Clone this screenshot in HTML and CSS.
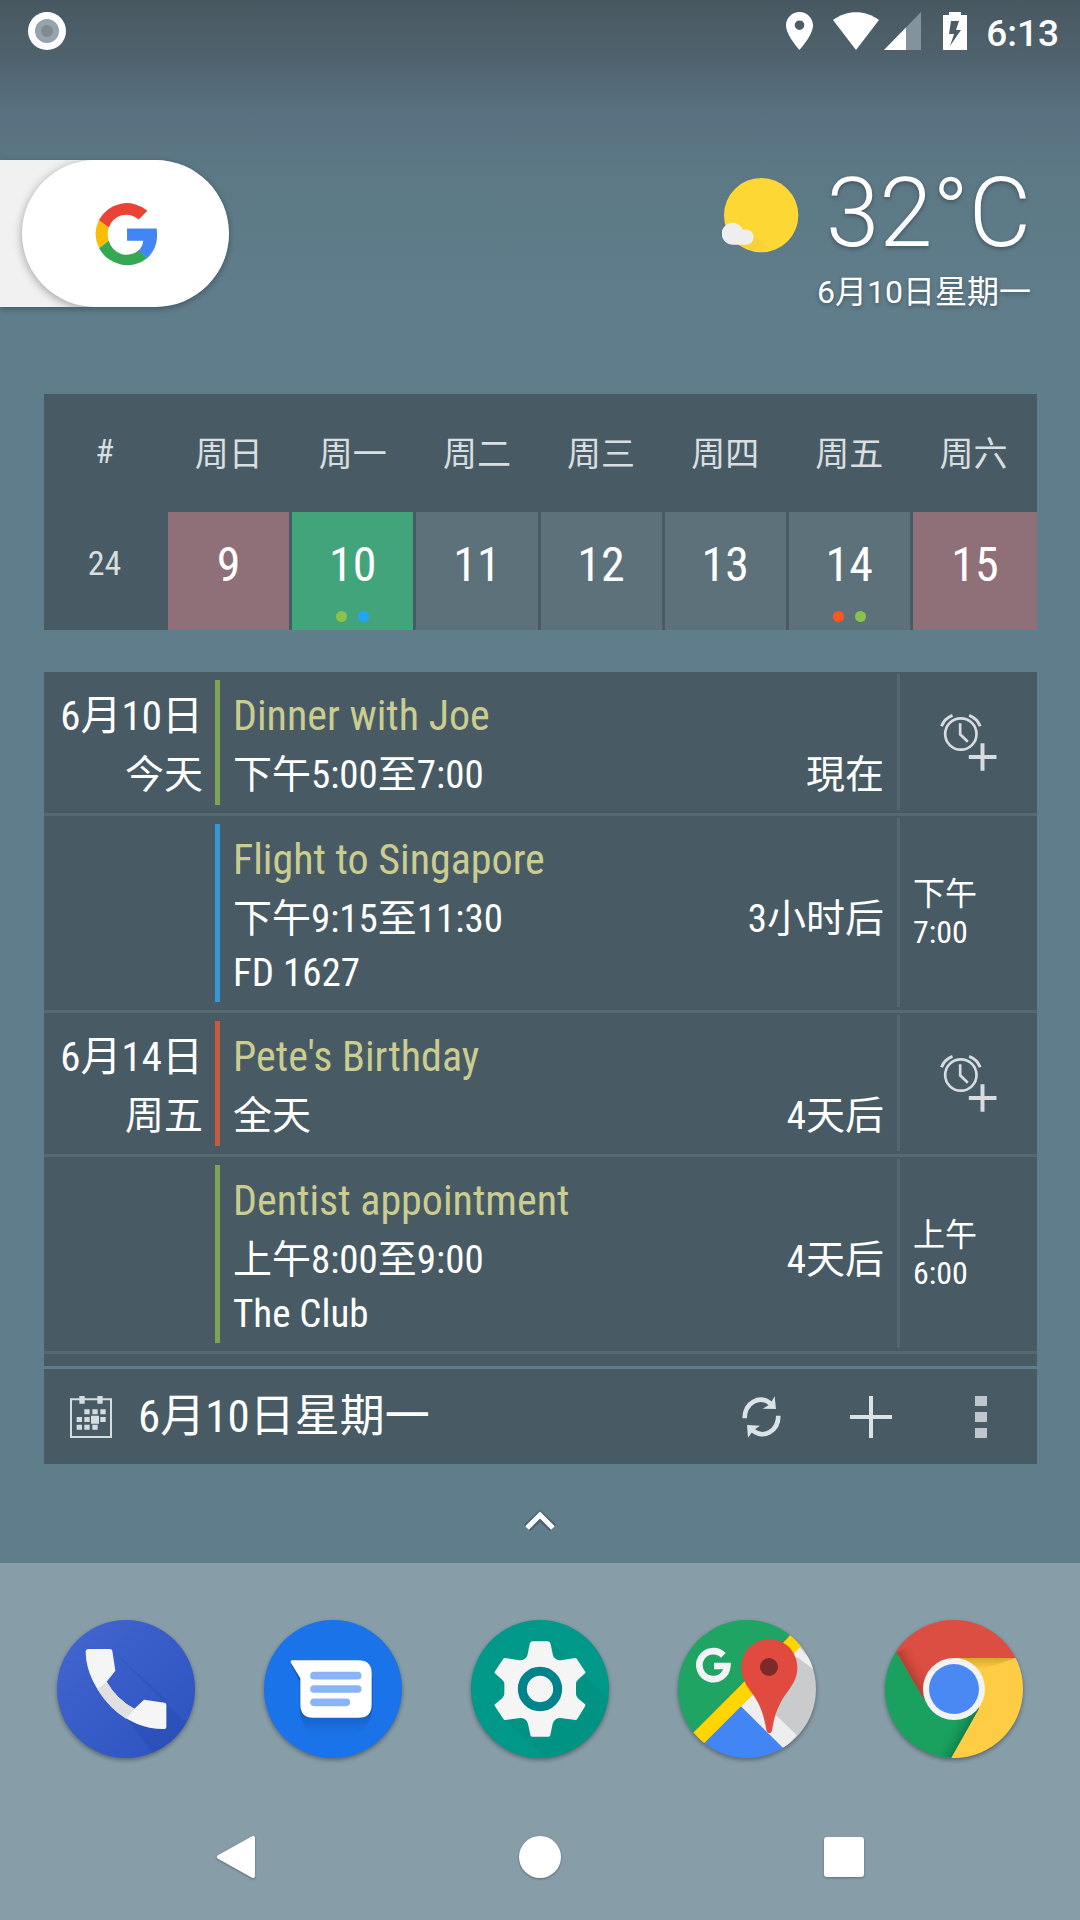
FILE: index.html
```
<!DOCTYPE html>
<html lang="zh-CN">
<head>
    <meta charset="UTF-8">
    <meta name="viewport" content="width=device-width, initial-scale=1.0">
    <title>日历小部件</title>
    <link rel="stylesheet" href="styles.css">
</head>
<body>
    <header class="status-bar">
        <svg class="status-app" viewBox="0 0 38 38" width="38" height="38">
            <circle cx="19" cy="19" r="19" fill="#fff"/>
            <circle cx="19" cy="19" r="12" fill="#95a3ab"/>
            <circle cx="19" cy="19" r="6" fill="#7f8b91"/>
        </svg>
        <svg class="status-pin" viewBox="0 0 27 38" width="27" height="38">
            <path fill="#fff" fill-rule="evenodd" d="M13.500 0C6 0 0 6 0 13.500 0 23 13.500 38 13.500 38S27 23 27 13.500C27 6 21 0 13.500 0zm0 18a4.800 4.800 0 1 1 0-9.600 4.800 4.800 0 0 1 0 9.600z"/>
        </svg>
        <svg class="status-wifi" viewBox="0 0 46 38" width="46" height="38">
            <path fill="#fff" d="M23 38L0 8C14-2.500 32-2.500 46 8z"/>
        </svg>
        <svg class="status-signal" viewBox="0 0 37 38" width="37" height="38">
            <path fill="#84939b" d="M37 0v38H0z"/>
            <path fill="#fff" d="M22 15.500V38H0z"/>
        </svg>
        <svg class="status-battery" viewBox="0 0 24 38" width="24" height="38">
            <path fill="#fff" fill-rule="evenodd" d="M6 0h12v3h6v35H0V3h6zM8 9L6 22h5L7 34 18 18h-5l3-9z"/>
        </svg>
        <span class="status-time">6:13</span>
    </header>

    <section class="glance">
        <div class="search-tab">
            <button class="search-pill" type="button" aria-label="Google">
                <svg viewBox="0 0 180 190" width="62" height="64" preserveAspectRatio="none">
                    <path fill="#ea4335" d="M152 26L127 52A54 57 0 0 0 40 76L11 54A92 95 0 0 1 152 26z"/>
                    <path fill="#fbbc05" d="M11 54L40 76A60 60 0 0 0 40 115L12 137A96 96 0 0 1 11 54z"/>
                    <path fill="#34a853" d="M12 137L40 115A54 57 0 0 0 127 143L152 166A92 95 0 0 1 12 137z"/>
                    <path fill="#4285f4" d="M93 79H179C184 118 173 147 152 166L126 144Q138 134 140 115H93z"/>
                </svg>
            </button>
        </div>
        <div class="weather">
            <div class="weather-now">
                <svg viewBox="68 534 230 226" width="77" height="75">
                    <circle cx="185" cy="646" r="112" fill="#fdd835"/>
                    <path fill="#f5c73a" opacity=".5" d="M161 705L205 745Q170 765 120 736z"/>
                    <path fill="#eee" d="M99 735a33 33 0 1 1 31-44 23 23 0 1 1 8 44z"/>
                </svg>
                <span class="temp">32°C</span>
            </div>
            <div class="weather-date">6月10日星期一</div>
        </div>
    </section>

    <main>
        <table class="week">
            <thead>
                <tr>
                    <th>#</th>
                    <th>周日</th>
                    <th>周一</th>
                    <th>周二</th>
                    <th>周三</th>
                    <th>周四</th>
                    <th>周五</th>
                    <th>周六</th>
                </tr>
            </thead>
            <tbody>
                <tr>
                    <th class="week-number">24</th>
                    <td class="weekend">9</td>
                    <td class="today">10<span class="dots"><i class="dot green"></i><i class="dot blue"></i></span></td>
                    <td>11</td>
                    <td>12</td>
                    <td>13</td>
                    <td>14<span class="dots"><i class="dot red"></i><i class="dot green"></i></span></td>
                    <td class="weekend">15</td>
                </tr>
            </tbody>
        </table>

        <section class="agenda">
            <ul class="events">
                <li class="event">
                    <div class="event-date"><div class="day">6月10日</div><div class="rel">今天</div></div>
                    <div class="bar bar-green"></div>
                    <div class="event-info">
                        <div class="title">Dinner with Joe</div>
                        <div class="when"><span>下午5:00至7:00</span><span>現在</span></div>
                    </div>
                    <div class="alarm">
                        <button class="alarm-add" type="button" aria-label="添加提醒">
                            <svg viewBox="720 158 170 174" width="57" height="58">
                                <g fill="none" stroke="#d6dcdf" stroke-width="8">
                                    <circle cx="782" cy="221" r="47"/>
                                    <path d="M780 189V222L803 244"/>
                                    <path d="M724 198Q733 174 757 165M807 165Q831 174 840 198" stroke-width="9"/>
                                    <path d="M847 249V331M806 290H889" stroke-width="12"/>
                                </g>
                            </svg>
                        </button>
                    </div>
                </li>
                <li class="event">
                    <div class="event-date"></div>
                    <div class="bar bar-blue"></div>
                    <div class="event-info">
                        <div class="title">Flight to Singapore</div>
                        <div class="when"><span>下午9:15至11:30</span><span>3小时后</span></div>
                        <div class="place">FD 1627</div>
                    </div>
                    <div class="alarm"><div class="alarm-time">下午<br>7:00</div></div>
                </li>
                <li class="event">
                    <div class="event-date"><div class="day">6月14日</div><div class="rel">周五</div></div>
                    <div class="bar bar-red"></div>
                    <div class="event-info">
                        <div class="title">Pete's Birthday</div>
                        <div class="when"><span>全天</span><span>4天后</span></div>
                    </div>
                    <div class="alarm">
                        <button class="alarm-add" type="button" aria-label="添加提醒">
                            <svg viewBox="720 158 170 174" width="57" height="58">
                                <g fill="none" stroke="#d6dcdf" stroke-width="8">
                                    <circle cx="782" cy="221" r="47"/>
                                    <path d="M780 189V222L803 244"/>
                                    <path d="M724 198Q733 174 757 165M807 165Q831 174 840 198" stroke-width="9"/>
                                    <path d="M847 249V331M806 290H889" stroke-width="12"/>
                                </g>
                            </svg>
                        </button>
                    </div>
                </li>
                <li class="event">
                    <div class="event-date"></div>
                    <div class="bar bar-green"></div>
                    <div class="event-info">
                        <div class="title">Dentist appointment</div>
                        <div class="when"><span>上午8:00至9:00</span><span>4天后</span></div>
                        <div class="place">The Club</div>
                    </div>
                    <div class="alarm"><div class="alarm-time">上午<br>6:00</div></div>
                </li>
            </ul>

            <div class="toolbar">
                <svg viewBox="0 0 126 126" width="42" height="42">
                    <path fill="none" stroke="#d6dde1" stroke-width="6" d="M3 10H123V123H3z"/>
                    <path fill="#d6dde1" d="M28 0h16v23H28zM82 0h16v23H82zM43 40h16v15H43zM67 40h16v15H67zM91 40h16v15H91zM20 63h16v15H20zM43 63h16v15H43zM63 59h24v24H63zM91 63h16v15H91zM20 86h16v15H20zM43 86h16v15H43zM67 86h16v15H67z"/>
                </svg>
                <span class="toolbar-date">6月10日星期一</span>
                <button type="button" aria-label="刷新">
                    <svg viewBox="300 165 126 126" width="42" height="42">
                        <path fill="none" stroke="#dce3e6" stroke-width="14" d="M314 232C314 186 358 160 392 188M415 224C415 270 370 296 338 268"/>
                        <path fill="#dce3e6" d="M404 166L408 204 368 203 390 190zM321 252L360 254 340 268 324 290z"/>
                    </svg>
                </button>
                <button type="button" aria-label="新建">
                    <svg viewBox="0 0 42 42" width="42" height="42">
                        <path stroke="#dce3e6" stroke-width="4" d="M21 0V42M0 21H42"/>
                    </svg>
                </button>
                <button type="button" aria-label="更多">
                    <svg viewBox="0 0 42 42" width="42" height="42">
                        <path fill="#bec7cb" d="M15 0h12v10H15zM15 16h12v10H15zM15 32h12v10H15z"/>
                    </svg>
                </button>
            </div>
        </section>
    </main>

    <svg class="chevron" viewBox="0 0 34 22" width="34" height="22">
        <path fill="none" stroke="#46565f" stroke-width="9" opacity=".7" d="M4 18L17 6L30 18"/>
        <path fill="none" stroke="#fff" stroke-width="5" d="M4 18L17 5L30 18"/>
    </svg>

    <footer class="dock">
        <nav class="apps">
            <a href="#" aria-label="电话">
                <svg viewBox="51 60 414 414">
                    <defs>
                        <linearGradient id="phoneBg" x1="0" y1="0" x2="1" y2="1">
                            <stop offset="0" stop-color="#4466d0"/>
                            <stop offset="1" stop-color="#2a52be"/>
                        </linearGradient>
                        <clipPath id="phoneClip"><circle cx="258" cy="267" r="207"/></clipPath>
                    </defs>
                    <circle cx="258" cy="267" r="207" fill="url(#phoneBg)"/>
                    <path clip-path="url(#phoneClip)" fill="#274cb3" opacity=".5" d="M217 150L470 400V474H350L262 358 378 300z"/>
                    <path fill="#f5f5f5" d="M146 147H210Q216 147 217 153L226 212 200 245Q230 298 283 326L312 299 374 308Q379 309 379 315V380Q379 387 371 387Q284 387 215 321Q138 240 137 155Q137 147 146 147z"/>
                    <path fill="#e0e0e0" d="M200 245Q230 298 283 326L258 356Q210 328 172 268z"/>
                </svg>
            </a>
            <a href="#" aria-label="信息">
                <svg viewBox="672 60 414 414">
                    <defs>
                        <linearGradient id="msgShade" x1="0" y1="0" x2="0" y2="1">
                            <stop offset="0" stop-color="#1558b8"/>
                            <stop offset=".6" stop-color="#1558b8"/>
                            <stop offset="1" stop-color="#1a73e8" stop-opacity="0"/>
                        </linearGradient>
                    </defs>
                    <circle cx="879" cy="267" r="207" fill="#1a73e8"/>
                    <path fill="url(#msgShade)" d="M752 192L779 245V330Q788 420 880 425Q985 420 998 325V230z"/>
                    <path fill="#fff" d="M757 181H955Q995 181 995 221V314Q995 353 955 353H820Q781 353 781 314V235L753 189Q750 181 757 181z"/>
                    <path stroke="#8ab4f8" stroke-width="23" stroke-linecap="round" d="M822 227H953M822 267H953M822 307H919"/>
                </svg>
            </a>
            <a href="#" aria-label="设置">
                <svg viewBox="63 60 414 414">
                    <defs>
                        <clipPath id="gearClip"><circle cx="270" cy="267" r="207"/></clipPath>
                    </defs>
                    <circle cx="270" cy="267" r="207" fill="#009888"/>
                    <path clip-path="url(#gearClip)" fill="#00897b" opacity=".35" d="M300 127L480 300V474H290L160 358 380 300z"/>
                    <path fill="#f5f5f5" stroke="#f5f5f5" stroke-width="10" stroke-linejoin="round" d="M247 129H293Q296 129 297 133L303 163Q306 178 318 183Q326 187 337 185L376 179 401 217 382 234Q373 242 373 252V282Q373 292 382 300L401 316 377 355 338 350Q326 348 317 352Q306 358 303 371L296 405H246L239 371Q236 358 225 352Q216 348 204 350L165 355 139 316 158 300Q168 292 168 282V252Q168 242 158 234L139 217 164 179 204 185Q215 187 223 183Q235 178 238 163L244 133Q245 129 247 129z"/>
                    <circle cx="270" cy="267" r="53" fill="#f5f5f5" stroke="#00838a" stroke-width="27"/>
                </svg>
            </a>
            <a href="#" aria-label="地图">
                <svg viewBox="684 60 414 414">
                    <defs>
                        <clipPath id="mapClip"><circle cx="891" cy="267" r="207"/></clipPath>
                    </defs>
                    <g clip-path="url(#mapClip)">
                        <path fill="#1fa463" d="M684 60H1060L720 410H684z"/>
                        <path fill="#c9cbcc" d="M1060 130H1100V480H1040L900 290z"/>
                        <path fill="#eee" d="M1047 140L1100 200V215L1040 170 920 290 1040 405 1000 450 870 320 900 290z"/>
                        <path fill="#4285f4" d="M872 318L1030 474H720z"/>
                        <path fill="#ffd600" d="M1022 105L1054 138 752 440 720 408z"/>
                    </g>
                    <path fill="none" stroke="#f1f3f4" stroke-width="20" d="M820 166A42 42 0 1 0 832 198H792"/>
                    <path fill="#e04a3f" d="M958 118C911 118 874 155 874 202C874 250 905 270 925 310C942 344 945 370 950 393Q958 407 966 393C970 370 973 344 991 310C1011 270 1042 250 1042 202C1042 155 1005 118 958 118z"/>
                    <circle cx="957" cy="201" r="27" fill="#7b2a29"/>
                </svg>
            </a>
            <a href="#" aria-label="Chrome">
                <svg viewBox="75 60 414 414">
                    <defs>
                        <linearGradient id="redShade" gradientUnits="userSpaceOnUse" x1="150" y1="225" x2="195" y2="200">
                            <stop offset="0" stop-color="#a83a30" stop-opacity=".8"/>
                            <stop offset="1" stop-color="#db4e41" stop-opacity="0"/>
                        </linearGradient>
                        <linearGradient id="yellowShade" x1="0" y1="0" x2="0" y2="1">
                            <stop offset="0" stop-color="#dba82f"/>
                            <stop offset="1" stop-color="#ffcd44"/>
                        </linearGradient>
                        <linearGradient id="greenShade" gradientUnits="userSpaceOnUse" x1="315" y1="405" x2="265" y2="378">
                            <stop offset="0" stop-color="#0c6e3c" stop-opacity=".7"/>
                            <stop offset="1" stop-color="#1aa15f" stop-opacity="0"/>
                        </linearGradient>
                        <clipPath id="chromeClip"><circle cx="282" cy="267" r="207"/></clipPath>
                    </defs>
                    <g clip-path="url(#chromeClip)">
                        <path fill="#1aa15f" d="M75 100H300V474H75z"/>
                        <path fill="#db4e41" d="M75 98V60H489V174H282L190 295z"/>
                        <path fill="url(#redShade)" d="M111 157L190 295 230 190 180 120z"/>
                        <path fill="#ffcd44" d="M489 174V474H273L357 325 282 174z"/>
                        <path fill="url(#yellowShade)" d="M290 174H467L368 208z"/>
                        <path fill="#1aa15f" d="M273 474L357 325 282 300 240 474z"/>
                        <path fill="url(#greenShade)" d="M273 474L357 325 270 350 200 455z"/>
                    </g>
                    <circle cx="282" cy="267" r="93" fill="#f3f3f3"/>
                    <circle cx="282" cy="267" r="75" fill="#4a89f4"/>
                </svg>
            </a>
        </nav>
        <nav class="nav-keys">
            <button type="button" aria-label="返回">
                <svg viewBox="0 0 42 42" width="42" height="42"><path fill="#fff" stroke="#fff" stroke-width="4" stroke-linejoin="round" d="M38 2V40L4 21z"/></svg>
            </button>
            <button type="button" aria-label="主屏幕">
                <svg viewBox="0 0 42 42" width="42" height="42"><circle cx="21" cy="21" r="21" fill="#fff"/></svg>
            </button>
            <button type="button" aria-label="最近任务">
                <svg viewBox="0 0 42 42" width="42" height="42"><rect x="1" y="1" width="40" height="40" rx="3" fill="#fff"/></svg>
            </button>
        </nav>
    </footer>
</body>
</html>
```

FILE: styles.css
```
* { box-sizing: border-box; }

body {
    margin: 0;
    min-height: 100vh;
    display: flex;
    flex-direction: column;
    font-family: "Roboto Condensed", "Liberation Sans Narrow", Roboto, "Noto Sans CJK SC", sans-serif;
    color: #fff;
    background: #607d8b linear-gradient(#485861 0, #4e616b 50px, #587080 110px, #5c7885 170px, #607d8b 300px) no-repeat;
}

button {
    padding: 0;
    border: none;
    background: none;
    cursor: pointer;
}

svg { display: block; }

/* status bar */
.status-bar {
    display: flex;
    align-items: center;
    height: 62px;
    padding: 0 21px 0 28px;
    font-family: Roboto, sans-serif;
}

.status-pin { margin-left: auto; }
.status-wifi { margin-left: 20px; }
.status-signal { margin-left: 5px; }
.status-battery { margin-left: 22px; }

.status-time {
    margin-left: 19px;
    padding-top: 5px;
    font-size: 37px;
    font-weight: 500;
    line-height: 44px;
}

/* search pill and weather */
.glance {
    display: flex;
    justify-content: space-between;
    margin-top: 98px;
    padding-right: 49px;
}

.search-tab {
    width: 229px;
    height: 147px;
    padding-left: 22px;
    border-radius: 0 74px 74px 0;
    background: #f1f1f1;
    box-shadow: 0 2px 6px rgba(0, 0, 0, 0.3);
    overflow: hidden;
}

.search-pill {
    display: flex;
    align-items: center;
    justify-content: center;
    width: 207px;
    height: 147px;
    border-radius: 74px;
    background: #fff;
    box-shadow: 0 2px 10px rgba(0, 0, 0, 0.35);
}

.weather {
    font-family: Roboto, "Noto Sans CJK SC", sans-serif;
    text-align: right;
    text-shadow: 0 2px 4px rgba(0, 0, 0, 0.3);
}

.weather-now {
    display: flex;
    align-items: center;
    justify-content: flex-end;
    gap: 27px;
}

.weather-now svg { margin-top: 4px; }

.temp {
    font-size: 96px;
    font-weight: 300;
    line-height: 106px;
}

.weather-date {
    font-size: 32px;
    line-height: 52px;
}

main {
    padding: 0 43px 0 44px;
}

/* week table */
.week {
    width: 100%;
    margin-top: 76px;
    table-layout: fixed;
    border-spacing: 0;
    background: #485b64;
}

.week th, .week td {
    height: 118px;
    padding: 0;
    text-align: center;
}

.week th {
    padding: 0 3px 4px 0;
    color: #d9dee1;
    font-size: 34px;
    font-weight: 400;
}

.week .week-number { padding-bottom: 16px; }

.week td {
    position: relative;
    font-size: 48px;
    padding-bottom: 14px;
    background: #5d717a;
    border-right: 3px solid #485b64;
}

.week td:last-child { border-right: none; }
.week .weekend { background: #8f6f78; }
.week .today { background: #42a47b; }

.dots {
    position: absolute;
    left: 0;
    right: 0;
    bottom: 8px;
    display: flex;
    justify-content: center;
    gap: 11px;
}

.dot {
    width: 11px;
    height: 11px;
    border-radius: 50%;
}

.dot.green { background: #8bc34a; }
.dot.blue { background: #22a7f8; }
.dot.red { background: #ff5722; }

/* agenda */
.agenda {
    margin-top: 42px;
    background: #485b64;
}

.events {
    margin: 0;
    padding: 0 0 12px;
    list-style: none;
    border-bottom: 3px solid #607d8b;
}

.event {
    display: flex;
    border-bottom: 3px solid #56696f;
}

.event-date {
    width: 159px;
    padding-top: 15px;
    text-align: right;
    white-space: nowrap;
}

.day {
    font-size: 41px;
    line-height: 58px;
}

.rel {
    font-size: 39px;
    line-height: 60px;
}

.bar {
    width: 5px;
    margin: 8px 13px 8px 12px;
}

.bar-green { background: #7da453; }
.bar-blue { background: #3398d6; }
.bar-red { background: #c55a3c; }

.event-info {
    flex: 1;
    padding: 15px 13px 8px 0;
}

.title {
    color: #cbcd90;
    font-size: 42px;
    line-height: 58px;
}

.when {
    display: flex;
    justify-content: space-between;
    font-size: 39px;
    line-height: 60px;
}

.place {
    padding-bottom: 5px;
    font-size: 39px;
    line-height: 48px;
}

.alarm {
    display: flex;
    align-items: center;
    width: 140px;
    margin: 2px 0 3px;
    border-left: 3px solid #54676f;
}

.alarm-add { margin: 0 auto; }

.alarm-time {
    padding-left: 13px;
    font-size: 32px;
    line-height: 38px;
}

.toolbar {
    display: flex;
    align-items: center;
    height: 95px;
    padding: 0 35px 0 26px;
}

.toolbar-date {
    flex: 1;
    padding-left: 26px;
    font-size: 45px;
    line-height: 60px;
}

.toolbar button { margin-left: 68px; }

.chevron { margin: 46px auto 20px; }

/* dock */
.dock {
    margin-top: auto;
    padding: 57px 57px 42px;
    background: #879da8;
}

.apps, .nav-keys {
    display: flex;
    justify-content: space-between;
}

.apps a {
    width: 138px;
    filter: drop-shadow(0 2px 2px rgba(0, 0, 0, 0.35));
}

.nav-keys {
    padding: 78px 158px 0;
}

.nav-keys svg { filter: drop-shadow(0 1px 1px rgba(0, 0, 0, 0.3)); }
```
